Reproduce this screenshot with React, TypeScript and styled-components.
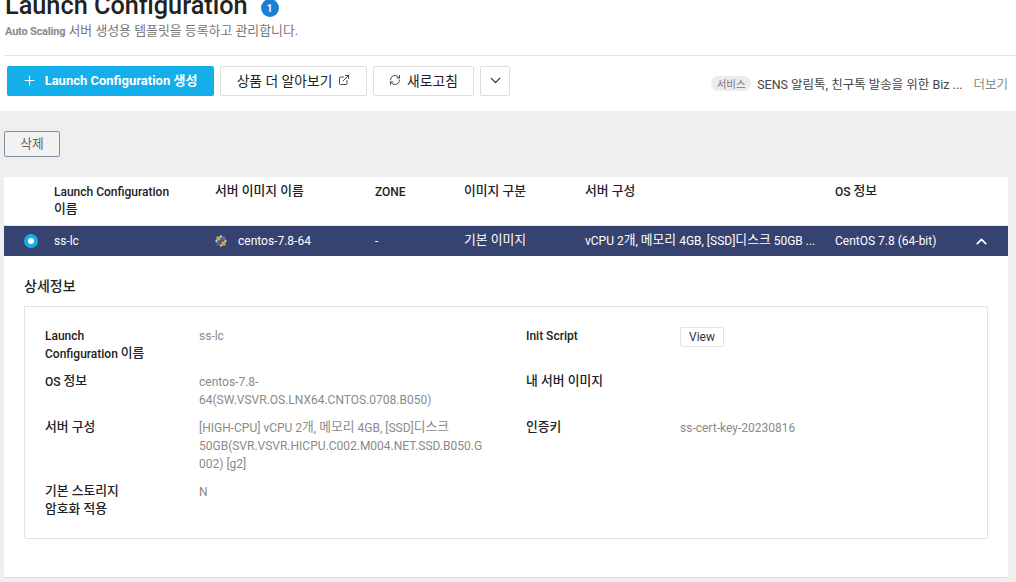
import { ExternalLink, RefreshCw, ChevronDown, ChevronUp, Plus } from 'lucide-react'
import { Fragment } from 'react'
import styled, { createGlobalStyle } from 'styled-components'

const GlobalStyle = createGlobalStyle`
    html, body {
        margin: 0;
        height: 582px;
        overflow: hidden;
        background: #efefef;
        font-family: Roboto, "Noto Sans CJK KR", sans-serif;
        font-size: 12px;
        color: #222;
    }
`

const columns = '50px 161px 160px 89px 121px 250px 1fr 54px'

const detailsLeft = [
    { label: 'Launch\nConfiguration 이름', value: 'ss-lc' },
    { label: 'OS 정보', value: 'centos-7.8-\n64(SW.VSVR.OS.LNX64.CNTOS.0708.B050)' },
    { label: '서버 구성', value: '[HIGH-CPU] vCPU 2개, 메모리 4GB, [SSD]디스크\n50GB(SVR.VSVR.HICPU.C002.M004.NET.SSD.B050.G\n002) [g2]' },
    { label: '기본 스토리지\n암호화 적용', value: 'N' },
]

// the korean glyphs in the reference run a bit larger than the latin ones
const Txt = ({ children }: { children: string }) => (
    <>
        {children.split(/([가-힣]+(?: [가-힣]+)*)/).map((part, i) => (
            <Fragment key={i}>
                {i % 2 === 1 ? <Ko>{part}</Ko> : part}
            </Fragment>
        ))}
    </>
)

const CentosLogo = () => (
    <svg width="12" height="12" viewBox="0 0 12 12">
        <rect x="1.5" y="1.5" width="4" height="4" fill="#9cc63f" />
        <rect x="6.5" y="1.5" width="4" height="4" fill="#8c5a9c" />
        <rect x="1.5" y="6.5" width="4" height="4" fill="#5a5aa0" />
        <rect x="6.5" y="6.5" width="4" height="4" fill="#e0a33c" />
        <path d="M6 0 7.5 1.5 6 3 4.5 1.5zM6 9 7.5 10.5 6 12 4.5 10.5zM0 6 1.5 4.5 3 6 1.5 7.5zM9 6 10.5 4.5 12 6 10.5 7.5z" fill="#c9c9c9" />
    </svg>
)

const App = () => {
    return (
        <Page>
            <GlobalStyle />
            <Header>
                <TitleRow>
                    <Title>Launch Configuration</Title>
                    <CountBadge>1</CountBadge>
                </TitleRow>
                <Subtitle><strong>Auto Scaling</strong> 서버 생성용 템플릿을 등록하고 관리합니다.</Subtitle>
                <Toolbar>
                    <PrimaryButton><Plus size={15} strokeWidth={1.8} />Launch Configuration 생성</PrimaryButton>
                    <ToolButton $width={147}>상품 더 알아보기<ExternalLink size={12} strokeWidth={1.6} /></ToolButton>
                    <ToolButton $width={101}><RefreshCw size={12} strokeWidth={1.6} />새로고침</ToolButton>
                    <ToolButton $width={30}><ChevronDown size={17} strokeWidth={1.6} /></ToolButton>
                    <Notice>
                        <NoticeTag>서비스</NoticeTag>
                        <NoticeText>SENS 알림톡, 친구톡 발송을 위한 Biz ...</NoticeText>
                        <NoticeMore>더보기</NoticeMore>
                    </Notice>
                </Toolbar>
            </Header>
            <Content>
                <DeleteButton>삭제</DeleteButton>
                <Card>
                    <HeaderRow>
                        <span />
                        <span>Launch Configuration <Txt>이름</Txt></span>
                        <span><Txt>서버 이미지 이름</Txt></span>
                        <span>ZONE</span>
                        <span><Txt>이미지 구분</Txt></span>
                        <span><Txt>서버 구성</Txt></span>
                        <span><Txt>OS 정보</Txt></span>
                    </HeaderRow>
                    <SelectedRow>
                        <Radio />
                        <span>ss-lc</span>
                        <ImageCell><CentosLogo />centos-7.8-64</ImageCell>
                        <span>-</span>
                        <span><Txt>기본 이미지</Txt></span>
                        <span><Txt>vCPU 2개, 메모리 4GB, [SSD]디스크 50GB ...</Txt></span>
                        <span>CentOS 7.8 (64-bit)</span>
                        <RowToggle><ChevronUp size={17} strokeWidth={2.4} /></RowToggle>
                    </SelectedRow>
                    <DetailSection>
                        <DetailTitle>상세정보</DetailTitle>
                        <DetailBox>
                            <DetailColumn>
                                {detailsLeft.map(({ label, value }) => (
                                    <DetailItem key={label}>
                                        <DetailLabel><Txt>{label}</Txt></DetailLabel>
                                        <DetailValue><Txt>{value}</Txt></DetailValue>
                                    </DetailItem>
                                ))}
                            </DetailColumn>
                            <DetailColumn>
                                <DetailItem $minHeight={36}>
                                    <DetailLabel>Init Script</DetailLabel>
                                    <DetailValue><ViewButton>View</ViewButton></DetailValue>
                                </DetailItem>
                                <DetailItem $minHeight={36}>
                                    <DetailLabel><Txt>내 서버 이미지</Txt></DetailLabel>
                                    <DetailValue />
                                </DetailItem>
                                <DetailItem>
                                    <DetailLabel><Txt>인증키</Txt></DetailLabel>
                                    <DetailValue>ss-cert-key-20230816</DetailValue>
                                </DetailItem>
                            </DetailColumn>
                        </DetailBox>
                    </DetailSection>
                </Card>
            </Content>
        </Page>
    )
}

const Ko = styled.span`
    font-size: 12.8px;
    line-height: 1;
    vertical-align: 1px;
`

const Page = styled.div`
    display: flex;
    flex-direction: column;
    width: 1016px;
    height: 582px;
    overflow: hidden;
`

const Header = styled.header`
    background: #fff;
    height: 111px;
    padding-left: 4px;
    box-sizing: border-box;
    flex-shrink: 0;
`

const TitleRow = styled.div`
    display: flex;
    align-items: center;
    gap: 13px;
    height: 22px;
    margin-top: -5px;
    padding-left: 1px;
`

const Title = styled.h1`
    margin: 0;
    font-size: 25.3px;
    line-height: 28px;
    font-weight: 500;
    color: #222;
`

const CountBadge = styled.span`
    display: flex;
    align-items: center;
    justify-content: center;
    width: 18px;
    height: 18px;
    margin-top: 4px;
    border-radius: 50%;
    background: #1b7fd8;
    color: #fff;
    font-size: 10px;
    font-weight: 700;
`

const Subtitle = styled.p`
    margin: 6px 0 0 0;
    height: 23px;
    line-height: 16px;
    font-size: 12.9px;
    color: #777;
    border-bottom: 1px solid #e2e2e2;
    padding-bottom: 9px;
    padding-left: 1px;

    & strong {
        font-size: 11px;
        letter-spacing: -0.2px;
        font-weight: 700;
        color: #8a8a8a;
    }
`

const Toolbar = styled.div`
    display: flex;
    align-items: center;
    gap: 6px;
    padding: 10px 8px 0 3px;
`

const PrimaryButton = styled.button`
    display: flex;
    align-items: center;
    justify-content: center;
    gap: 8px;
    width: 207px;
    height: 30px;
    border: 0;
    border-radius: 2px;
    background: #14aeea;
    color: #fff;
    font: 700 13px Roboto, "Noto Sans CJK KR", sans-serif;
    padding: 0 2px 3px 0;

    & svg {
        margin-top: 2px;
    }
`

const ToolButton = styled.button<{ $width: number }>`
    display: flex;
    align-items: center;
    justify-content: center;
    gap: 6px;
    width: ${props => props.$width}px;
    height: 30px;
    padding: 0 0 2px;
    background: #fff;
    border: 1px solid #dedede;
    border-radius: 2px;
    color: #222;
    font: 400 13.8px Roboto, "Noto Sans CJK KR", sans-serif;
`

const Notice = styled.div`
    display: flex;
    align-items: center;
    margin-left: auto;
    padding-top: 5px;
`

const NoticeTag = styled.span`
    display: flex;
    align-items: center;
    justify-content: center;
    width: 40px;
    height: 15px;
    border-radius: 8px;
    background: #ececec;
    color: #777;
    font-size: 10.5px;
`

const NoticeText = styled.span`
    margin-left: 6px;
    font-size: 12.5px;
    color: #444;
`

const NoticeMore = styled.span`
    margin-left: 11px;
    font-size: 12.5px;
    color: #888;
`

const Content = styled.main`
    flex: 1;
    padding: 20px 8px 0 4px;
`

const DeleteButton = styled.button`
    display: block;
    width: 56px;
    height: 26px;
    padding: 0 0 3px;
    background: #f2f2f2;
    border: 1px solid #7f8fa3;
    border-radius: 2px;
    color: #666;
    font: 400 12.8px Roboto, "Noto Sans CJK KR", sans-serif;
`

const Card = styled.section`
    margin-top: 20px;
    height: 400px;
    background: #fff;
    border-radius: 2px;
    box-shadow: 0 1px 1px #dcdcdc;
`

const HeaderRow = styled.div`
    display: grid;
    grid-template-columns: ${columns};
    height: 49px;
    box-sizing: border-box;
    padding-top: 6px;
    font-weight: 500;
    line-height: 18px;
    color: #222;
    border-bottom: 1px solid #e2e2e2;

    & > span:nth-child(2) {
        padding-right: 40px;
    }
`

const SelectedRow = styled.div`
    display: grid;
    grid-template-columns: ${columns};
    align-items: center;
    height: 30px;
    background: #36426f;
    color: #fff;
    font-weight: 400;
    white-space: nowrap;
`

const Radio = styled.span`
    justify-self: center;
    margin-left: 3px;
    width: 14px;
    height: 14px;
    box-sizing: border-box;
    border-radius: 50%;
    background: #fff;
    border: 4px solid #14aeea;
`

const ImageCell = styled.span`
    display: flex;
    align-items: center;
    gap: 11px;
`

const RowToggle = styled.span`
    display: flex;
    justify-content: center;
`

const DetailSection = styled.div`
    padding: 20px 20px 0;
`

const DetailTitle = styled.h2`
    margin: 0;
    font-size: 14px;
    line-height: 20px;
    font-weight: 500;
    color: #222;
`

const DetailBox = styled.div`
    display: grid;
    grid-template-columns: 481px 1fr;
    margin-top: 10px;
    height: 233px;
    box-sizing: border-box;
    padding: 20px 20px 0;
    border: 1px solid #e2e2e2;
    border-radius: 2px;
`

const DetailColumn = styled.div`
    display: flex;
    flex-direction: column;
    gap: 10px;
`

const DetailItem = styled.div<{ $minHeight?: number }>`
    display: grid;
    grid-template-columns: 154px 1fr;
    line-height: 18px;
    min-height: ${props => props.$minHeight ?? 0}px;
`

const DetailLabel = styled.span`
    font-weight: 500;
    color: #222;
    white-space: pre-line;
`

const DetailValue = styled.span`
    color: #8a8a8a;
    white-space: pre;
`

const ViewButton = styled.button`
    display: block;
    width: 44px;
    height: 20px;
    padding: 0;
    background: #fff;
    border: 1px solid #e4e4e4;
    border-radius: 2px;
    color: #333;
    font: 400 12px Roboto, "Noto Sans CJK KR", sans-serif;
`

export default App
